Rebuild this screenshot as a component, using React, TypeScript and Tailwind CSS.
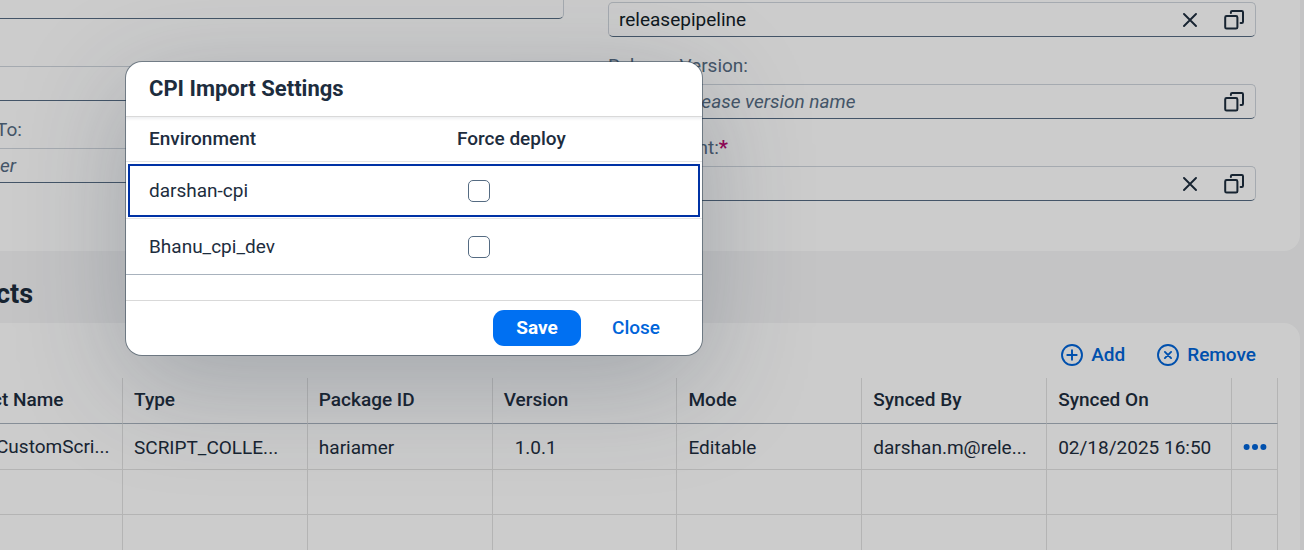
import React from "react";

const fieldBox =
  "flex h-[35px] items-center rounded-[5px] border border-[#cfd5dc] border-b-[#556b82] bg-white";
const labelRow = "flex h-[47px] items-center pt-[11px] text-[#556b82]";

function ClearIcon() {
  return (
    <svg width="14" height="14" viewBox="0 0 14 14" fill="none" stroke="currentColor" strokeWidth="1.9" strokeLinecap="round">
      <path d="M1 1l12 12M13 1L1 13" />
    </svg>
  );
}

function ValueHelpIcon() {
  return (
    <svg width="20" height="20" viewBox="0 0 20 20" fill="none" stroke="currentColor" strokeWidth="2" strokeLinecap="round">
      <rect x="1.2" y="6" width="12.2" height="12.6" rx="1.4" />
      <path d="M6.9 3V2.2A1.2 1.2 0 0 1 8.1 1h9.7A1.2 1.2 0 0 1 19 2.2v9.6a1.2 1.2 0 0 1-1.2 1.2H16.6" />
    </svg>
  );
}

function AddIcon() {
  return (
    <svg width="22" height="22" viewBox="0 0 22 22" fill="none" stroke="currentColor" strokeWidth="1.9" strokeLinecap="round">
      <circle cx="11" cy="11" r="10" />
      <path d="M11 6.3v9.4M6.3 11h9.4" />
    </svg>
  );
}

function RemoveIcon() {
  return (
    <svg width="22" height="22" viewBox="0 0 22 22" fill="none" stroke="currentColor" strokeWidth="1.9" strokeLinecap="round">
      <circle cx="11" cy="11" r="10" />
      <path d="M7.9 7.9l6.2 6.2M14.1 7.9l-6.2 6.2" />
    </svg>
  );
}

function MoreIcon() {
  return (
    <svg width="24" height="6" viewBox="0 0 24 6" fill="currentColor">
      <circle cx="3.6" cy="3" r="3" />
      <circle cx="12" cy="3" r="3" />
      <circle cx="20.4" cy="3" r="3" />
    </svg>
  );
}

type FieldProps = {
  id: string;
  name: string;
  value?: string;
  placeholder?: string;
  clearable?: boolean;
};

function HelpField({ id, name, value, placeholder, clearable }: FieldProps) {
  return (
    <div className={fieldBox}>
      <input
        id={id}
        aria-label={name}
        defaultValue={value}
        placeholder={placeholder}
        className="min-w-0 flex-1 bg-transparent pl-[10px] text-[#131e29] outline-none placeholder:text-[#556b82] placeholder:italic"
      />
      {clearable && (
        <button type="button" aria-label="Clear" className="flex w-[46px] justify-center text-[#1d2d3e]">
          <ClearIcon />
        </button>
      )}
      <button type="button" aria-label="Open value help" className="flex w-[42px] justify-center text-[#1d2d3e]">
        <ValueHelpIcon />
      </button>
    </div>
  );
}

const columns = ["ct Name", "Type", "Package ID", "Version", "Mode", "Synced By", "Synced On"];
const artifact = ["CustomScri...", "SCRIPT_COLLE...", "hariamer", "1.0.1", "Editable", "darshan.m@rele...", "02/18/2025 16:50"];
const environments = ["darshan-cpi", "Bhanu_cpi_dev"];

function ReleaseForm() {
  return (
    <section className="mr-1 grid h-[251px] grid-cols-[564fr_648fr] gap-x-[44px] rounded-br-2xl bg-white pr-[44px]">
      <div>
        <div className="h-[19px] rounded-br-[5px] border-r border-b border-r-[#cfd5dc] border-b-[#556b82]" />
        <div className="h-[47px]" />
        <input
          aria-label="Description"
          className="block h-[35px] w-full rounded-r-[5px] border border-l-0 border-[#cfd5dc] border-b-[#556b82] outline-none"
        />
        <label htmlFor="assignee" className={labelRow + " -ml-1"}>
          To:
        </label>
        <input
          id="assignee"
          placeholder="er"
          className="block h-[35px] w-full rounded-r-[5px] border border-l-0 border-[#cfd5dc] border-b-[#556b82] outline-none placeholder:text-[#556b82] placeholder:italic"
        />
      </div>
      <div className="pt-[2px]">
        <HelpField id="pipeline" name="Pipeline" value="releasepipeline" clearable />
        <label htmlFor="version" className={labelRow}>
          Release Version:
        </label>
        <HelpField id="version" name="Release Version" placeholder="Enter a release version name" />
        <label htmlFor="environment" className={labelRow}>
          Environment:<span className="text-xl font-bold text-[#ba066c]">*</span>
        </label>
        <HelpField id="environment" name="Environment" clearable />
      </div>
    </section>
  );
}

function ArtifactTable() {
  return (
    <section className="mr-1 rounded-tr-2xl bg-white pr-[22px]">
      <div className="flex h-[55px] items-center justify-end gap-8 pt-[9px] pr-[22px] font-medium text-[#0064d9]">
        <button type="button" className="flex items-center gap-2">
          <AddIcon />
          Add
        </button>
        <button type="button" className="flex items-center gap-2">
          <RemoveIcon />
          Remove
        </button>
      </div>
      <table className="w-full table-fixed border-separate border-spacing-0 text-[#1d2d3e]">
        <colgroup>
          <col className="w-[123px]" />
          {columns.slice(1).map((name) => (
            <col key={name} />
          ))}
          <col className="w-[46px]" />
        </colgroup>
        <thead>
          <tr className="h-[46px]">
            {columns.map((name, i) => (
              <th
                key={name}
                className={
                  "border-r border-b border-r-[#e1e1e1] border-b-[#a8b2bd] pb-[2px] text-left font-medium " +
                  (i === 0 ? "-indent-2" : "pl-[11px]")
                }
              >
                {name}
              </th>
            ))}
            <th aria-label="Actions" className="border-r border-b border-r-[#e1e1e1] border-b-[#a8b2bd]" />
          </tr>
        </thead>
        <tbody>
          <tr className="h-[46px]">
            {artifact.map((text, i) => (
              <td
                key={text}
                className={
                  "border-r border-b border-[#e1e1e1] whitespace-nowrap " +
                  (i === 0 ? "-indent-1" : i === 3 ? "pt-[2px] pl-[22px]" : "pt-[2px] pl-[11px]")
                }
              >
                {text}
              </td>
            ))}
            <td className="border-r border-b border-[#e1e1e1]">
              <button type="button" aria-label="More actions" className="flex w-full justify-center text-[#0064d9]">
                <MoreIcon />
              </button>
            </td>
          </tr>
          {[0, 1].map((row) => (
            <tr key={row} className="h-[45px]">
              {columns.map((name) => (
                <td key={name} className="border-r border-b border-[#e1e1e1]" />
              ))}
              <td className="border-r border-b border-[#e1e1e1]" />
            </tr>
          ))}
        </tbody>
      </table>
    </section>
  );
}

function ImportDialog() {
  return (
    <div
      role="dialog"
      aria-modal="true"
      aria-labelledby="dialog-title"
      className="w-[576px] max-w-full overflow-hidden rounded-2xl bg-white text-[#1d2d3e] shadow-[0_0_0_1px_rgba(34,53,72,0.5),0_27px_110px_0_rgba(34,53,72,0.25)]"
    >
      <h2 id="dialog-title" className="flex h-[55px] items-center border-b border-[#d9d9d9] px-[23px] text-[22px] font-bold">
        CPI Import Settings
      </h2>
      <table className="w-full table-fixed border-separate border-spacing-0 shadow-[inset_0_3px_3px_-1px_rgba(34,53,72,0.08)]">
        <colgroup>
          <col className="w-[331px]" />
          <col />
        </colgroup>
        <thead>
          <tr className="h-[45px]">
            <th className="border-b border-[#e5e5e5] pl-[23px] text-left font-medium">Environment</th>
            <th className="border-b border-[#e5e5e5] text-left font-medium">Force deploy</th>
          </tr>
        </thead>
        <tbody>
          {environments.map((name, i) => (
            <tr
              key={name}
              className={i === 0 ? "h-[57px] outline-2 -outline-offset-4 outline-[#0032a5]" : "h-[56px]"}
            >
              <td className={"border-b pl-[23px] " + (i === 0 ? "border-[#e5e5e5] pt-px" : "border-[#a8b2bd]")}>{name}</td>
              <td className={"border-b pl-[11px] " + (i === 0 ? "border-[#e5e5e5] pt-px" : "border-[#a8b2bd]")}>
                <input
                  type="checkbox"
                  aria-label={"Force deploy " + name}
                  className="block size-[22px] appearance-none rounded-[5px] border border-[#556b82] bg-white checked:bg-[#0070f2]"
                />
              </td>
            </tr>
          ))}
        </tbody>
      </table>
      <div className="mt-[25px] flex h-[55px] items-center justify-end gap-[9px] border-t border-[#d9d9d9] pr-[20px]">
        <button type="button" className="h-[36px] w-[88px] rounded-[11px] bg-[#0070f2] font-bold text-white">
          Save
        </button>
        <button type="button" className="h-[36px] w-[92px] rounded-[11px] font-medium text-[#0064d9]">
          Close
        </button>
      </div>
    </div>
  );
}

export default function App() {
  return (
    <div className="relative h-screen overflow-hidden bg-[#f5f6f7] font-['Roboto',sans-serif] text-[19px] leading-6">
      <ReleaseForm />
      <h2 className="-ml-1 flex h-[72px] items-center pt-[14px] text-[27px] font-bold text-[#1d2d3e]">cts</h2>
      <ArtifactTable />
      <div className="absolute inset-0 bg-black/20 pt-[62px] pl-[126px]">
        <ImportDialog />
      </div>
    </div>
  );
}
